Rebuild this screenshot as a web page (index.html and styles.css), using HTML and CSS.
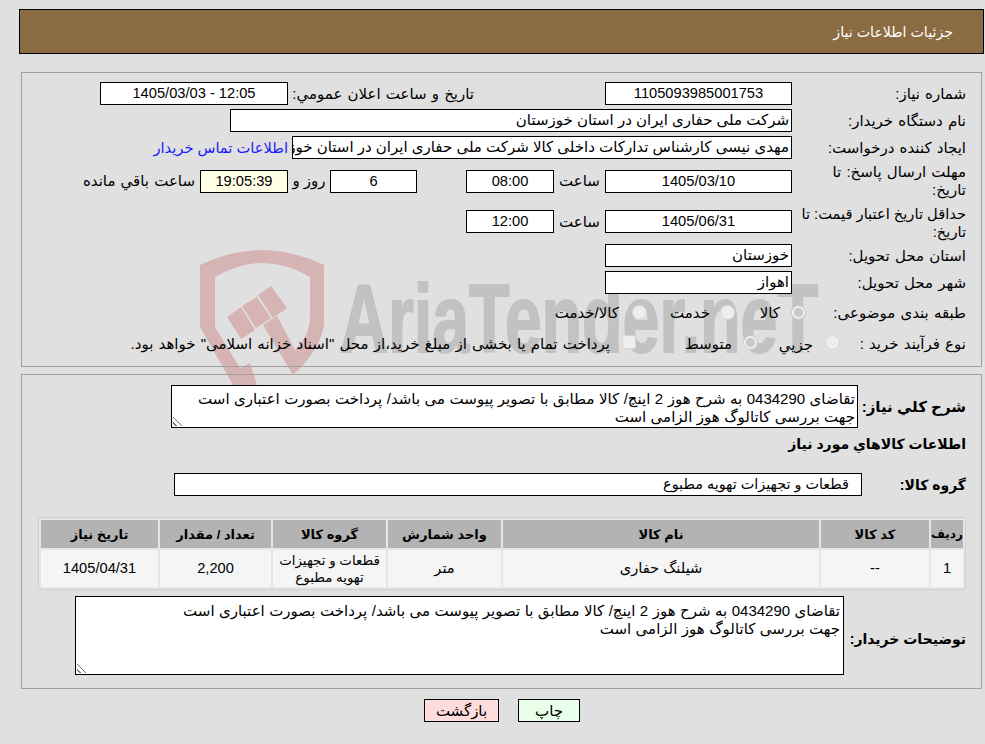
FILE: index.html
```html
<!DOCTYPE html>
<html lang="fa" dir="rtl">
<head>
<meta charset="utf-8">
<title>جزئیات اطلاعات نیاز</title>
<link rel="stylesheet" href="styles.css">
</head>
<body>
<svg class="watermark" width="620" height="140" viewBox="0 0 620 140" aria-hidden="true">
  <path class="wm-red" d="M0 15 Q62 -15 124 15 V75 Q120 100 93 125 L63 75 L77 66 L95 100 Q110 85 110 67 V27 Q62 -1 15 27 V77 L40 118 L50 113 L57 135 L33 135 L0 77 Z"/>
  <path class="wm-red" d="M27 67 L41 57 L55 80 L41 89 Z M42 56 L57 47 L71 68 L56 78 Z M58 45 L71 36 L87 58 L73 68 Z"/>
  <text class="wm-text" x="140" y="102" direction="ltr" textLength="478" lengthAdjust="spacingAndGlyphs">AriaTender.neT</text>
</svg>
<header class="title-bar"><h1>جزئیات اطلاعات نیاز</h1></header>

<section class="panel main-panel">
  <div class="row r-need">
    <div class="label">شماره نیاز:</div>
    <div class="box w187 center num">1105093985001753</div>
    <div class="announce-label">تاریخ و ساعت اعلان عمومي:</div>
    <div class="box announce center num">12:05 - 1405/03/03</div>
  </div>
  <div class="row r-buyer">
    <div class="label">نام دستگاه خریدار:</div>
    <div class="box buyer">شرکت ملی حفاری ایران در استان خوزستان</div>
  </div>
  <div class="row r-creator">
    <div class="label">ایجاد کننده درخواست:</div>
    <div class="box creator">مهدی نیسی کارشناس تدارکات داخلی کالا شرکت ملی حفاری ایران در استان خوزستان</div>
    <a class="contact" href="#">اطلاعات تماس خریدار</a>
  </div>
  <div class="row r-date">
    <div class="label">مهلت ارسال پاسخ: تا تاریخ:</div>
    <div class="box w187 center num">1405/03/10</div>
    <span class="hour">ساعت</span>
    <div class="box w88 center num">08:00</div>
    <div class="box w88 center num days">6</div>
    <span class="day-word">روز و</span>
    <div class="box w88 center num timer">19:05:39</div>
    <span class="remain">ساعت باقي مانده</span>
  </div>
  <div class="row r-date2">
    <div class="label label-price">حداقل تاریخ اعتبار قیمت: تا تاریخ:</div>
    <div class="box w187 center num">1405/06/31</div>
    <span class="hour">ساعت</span>
    <div class="box w88 center num">12:00</div>
  </div>
  <div class="row r-prov">
    <div class="label">استان محل تحویل:</div>
    <div class="box w187">خوزستان</div>
  </div>
  <div class="row r-city">
    <div class="label">شهر محل تحویل:</div>
    <div class="box w187">اهواز</div>
  </div>
  <div class="row r-cat">
    <div class="label label-cat">طبقه بندی موضوعی:</div>
    <span class="opt o1"><span class="radio on"></span><span>کالا</span></span>
    <span class="opt o2"><span class="radio"></span><span>خدمت</span></span>
    <span class="opt o3"><span class="radio"></span><span>کالا/خدمت</span></span>
  </div>
  <div class="row r-proc">
    <div class="label label-proc">نوع فرآیند خرید :</div>
    <span class="opt p1"><span class="radio"></span><span class="low">جزیي</span></span>
    <span class="opt p2"><span class="radio on"></span><span>متوسط</span></span>
    <span class="opt p3"><span class="check"></span><span class="spaced">پرداخت تمام یا بخشی از مبلغ خرید،از محل "اسناد خزانه اسلامی" خواهد بود.</span></span>
  </div>
</section>

<section class="panel lower-panel">
  <div class="row r-summary">
    <div class="b-label summary-label">شرح کلي نیاز:</div>
    <div class="box summary">تقاضای 0434290 به شرح هوز 2 اینچ/ کالا مطابق با تصویر پیوست می باشد/ پرداخت بصورت اعتباری است<br>جهت بررسی کاتالوگ هوز الزامی است<span class="grip"></span></div>
  </div>
  <h2 class="goods-title">اطلاعات کالاهاي مورد نیاز</h2>
  <div class="row r-group">
    <div class="b-label group-label">گروه کالا:</div>
    <div class="box group">قطعات و تجهیزات تهویه مطبوع</div>
  </div>
  <table class="goods">
    <thead>
      <tr><th class="c1">ردیف</th><th class="c2">کد کالا</th><th class="c3">نام کالا</th><th class="c4">واحد شمارش</th><th class="c5">گروه کالا</th><th class="c6">تعداد / مقدار</th><th class="c7">تاریخ نیاز</th></tr>
    </thead>
    <tbody>
      <tr><td>1</td><td>--</td><td>شیلنگ حفاری</td><td>متر</td><td class="cell-group">قطعات و تجهیزات<br>تهویه مطبوع</td><td>2,200</td><td>1405/04/31</td></tr>
    </tbody>
  </table>
  <div class="row r-notes">
    <div class="b-label notes-label">توضیحات خریدار:</div>
    <div class="box notes">تقاضای 0434290 به شرح هوز 2 اینچ/ کالا مطابق با تصویر پیوست می باشد/ پرداخت بصورت اعتباری است<br>جهت بررسی کاتالوگ هوز الزامی است<span class="grip"></span></div>
  </div>
</section>

<div class="actions">
  <button class="btn print" type="button">چاپ</button>
  <button class="btn back" type="button">بازگشت</button>
</div>
</body>
</html>
```

FILE: styles.css
```css
* { box-sizing: border-box; }
html, body { margin: 0; padding: 0; }
body {
  position: relative;
  width: 985px;
  height: 744px;
  overflow: hidden;
  background: #e0e0e0;
  color: #000;
  font-family: "Liberation Sans", "DejaVu Sans", sans-serif;
  font-size: 15px;
  padding-top: 9px;
}
.watermark { position: absolute; left: 200px; top: 250px; }
.wm-red { fill: #d6b4b4; }
.wm-text { fill: #c2c2c2; stroke: #c2c2c2; stroke-width: 2px; font-family: "Liberation Sans", sans-serif; font-size: 96px; font-weight: 700; }
.title-bar {
  position: relative;
  height: 45px;
  margin-right: 1px;
  width: 965px;
  background: #8b6b42;
  border: 1px solid #000;
  display: flex;
  align-items: center;
  padding: 1px 30px 0 0;
}
.title-bar h1 { margin: 0; color: #fff; font-size: 14.2px; font-weight: 400; }
.panel {
  position: relative;
  margin-right: 3px;
  width: 961px;
  border: 1px solid #a0a0a0;
}
.main-panel { margin-top: 18px; height: 295px; }
.lower-panel { margin-top: 7px; height: 315px; padding-right: 15px; }
.row { display: flex; align-items: center; position: relative; }
.label { width: 189px; flex: none; line-height: 18px; padding: 0 15px 0 4px; word-spacing: 1px; }
.label-price { font-size: 14.67px; word-spacing: 0; padding-left: 2px; }
.box {
  background: #fff;
  border: 1px solid #000;
  height: 23px;
  line-height: 20px;
  flex: none;
  padding: 0 2px;
  overflow: hidden;
  white-space: nowrap;
  position: relative;
}
.num { font-size: 14.67px; }
.center { text-align: center; }
.w187 { width: 187px; }
.w88 { width: 88px; }
.r-need { height: 23px; margin-top: 9px; }
.announce-label { margin-right: 131px; width: 186px; flex: none; white-space: nowrap; word-spacing: 1px; }
.announce { width: 188px; }
.r-buyer { height: 23px; margin-top: 4px; }
.buyer { width: 562px; }
.r-creator { height: 23px; margin-top: 4px; }
.creator { width: 500px; }
.contact { color: #1a1aff; text-decoration: none; margin-right: 4px; white-space: nowrap; font-size: 14.67px; }
.r-date { height: 38px; margin-top: 3px; }
.r-date2 { height: 36px; margin-top: 5px; }
.r-date2 .box { align-self: flex-start; margin-top: 5px; }
.r-date2 .hour { align-self: flex-start; margin-top: 8px; }
.hour { width: 51px; flex: none; text-align: center; }
.days { margin-right: 49px; width: 87px; }
.day-word { width: 42px; flex: none; text-align: center; }
.timer { background: #ffffe6; }
.remain { margin-right: 5px; white-space: nowrap; word-spacing: 1px; }
.r-prov { height: 23px; margin-top: 3px; }
.r-city { height: 23px; margin-top: 4px; }
.r-cat { height: 24px; margin-top: 7px; }
.r-proc { height: 24px; margin-top: 7px; }
.label-cat { width: 175px; padding-left: 0; white-space: nowrap; }
.label-proc { width: 141px; padding-left: 0; white-space: nowrap; }
.opt { display: inline-flex; align-items: center; white-space: nowrap; flex: none; }
.o1 { width: 71px; gap: 11px; }
.o2 { width: 88px; gap: 10px; }
.o3 { gap: 13px; }
.p1 { width: 82px; gap: 12px; }
.p2 { width: 122px; gap: 11px; }
.p3 { gap: 12px; }
.spaced { word-spacing: 1px; }
.low { position: relative; top: 1px; }
.radio {
  width: 15px; height: 15px; flex: none;
  border-radius: 50%;
  background: #eeeeee;
  border: 1px solid #d6d6d6;
  position: relative;
  top: -2px;
}
.r-cat .radio { top: -1px; }
.radio.on { border-color: #c6c6c6; }
.radio.on::after {
  content: "";
  position: absolute;
  left: 2px; top: 2px;
  width: 9px; height: 9px;
  border-radius: 50%;
  background: #c8c8c8;
}
.check {
  width: 14px; height: 14px; flex: none;
  background: #eeeeee;
  border: 1px solid #d6d6d6;
  border-radius: 2px;
  position: relative;
  top: -2px;
}
.b-label { font-weight: 700; flex: none; white-space: nowrap; }
.r-summary { margin-top: 10px; height: 43px; }
.summary-label { width: 108px; }
.summary {
  width: 687px;
  height: 43px;
  line-height: 18px;
  padding: 4px 2px 0;
  word-spacing: 0.3px;
}
.goods-title { margin: 4px 0 0; font-size: 14px; line-height: 24px; }
.r-group { margin-top: 17px; height: 23px; }
.group-label { width: 104px; font-size: 14px; }
.group { width: 688px; padding-right: 12px; font-size: 14.4px; }
.goods {
  width: 928px;
  margin-top: 21px;
  border-collapse: separate;
  border-spacing: 2px;
  border: 1px solid #cfcfcf;
  background: #e6e6e6;
  table-layout: fixed;
  font-size: 14.67px;
}
.goods th {
  background: #b3b3b3;
  height: 28px;
  padding: 0;
  font-size: 13px;
  font-weight: 700;
}
.goods th.c1 { font-size: 12px; }
.goods td {
  background: #f5f5f5;
  height: 37px;
  padding: 0;
  text-align: center;
  line-height: 17px;
}
.goods td.cell-group { font-size: 13.4px; }
.c1 { width: 32px; }
.c2 { width: 108px; }
.c3 { width: 316px; }
.c4 { width: 113px; }
.c5 { width: 113px; }
.c6 { width: 111px; }
.c7 { width: 117px; }
.r-notes { margin-top: 6px; height: 79px; }
.notes-label { width: 122px; font-size: 14px; position: relative; top: 3px; }
.notes {
  width: 769px;
  height: 79px;
  line-height: 18px;
  padding: 5px 3px 0;
  word-spacing: 0.3px;
}
.grip {
  position: absolute;
  left: 1px;
  bottom: 1px;
  width: 10px;
  height: 10px;
  background: repeating-linear-gradient(45deg, transparent 0 2px, #777 2px 3px, transparent 3px 4px);
  clip-path: polygon(0 0, 100% 100%, 0 100%);
}
.actions {
  display: flex;
  justify-content: center;
  gap: 19px;
  margin: 10px 0 0 19px;
}
.btn {
  height: 23px;
  border: 1px solid #000;
  color: #000;
  font: inherit;
  padding: 0;
  line-height: 20px;
}
.print { width: 62px; background: #e9ffe9; }
.back { width: 75px; background: #ffdcdc; }
```
